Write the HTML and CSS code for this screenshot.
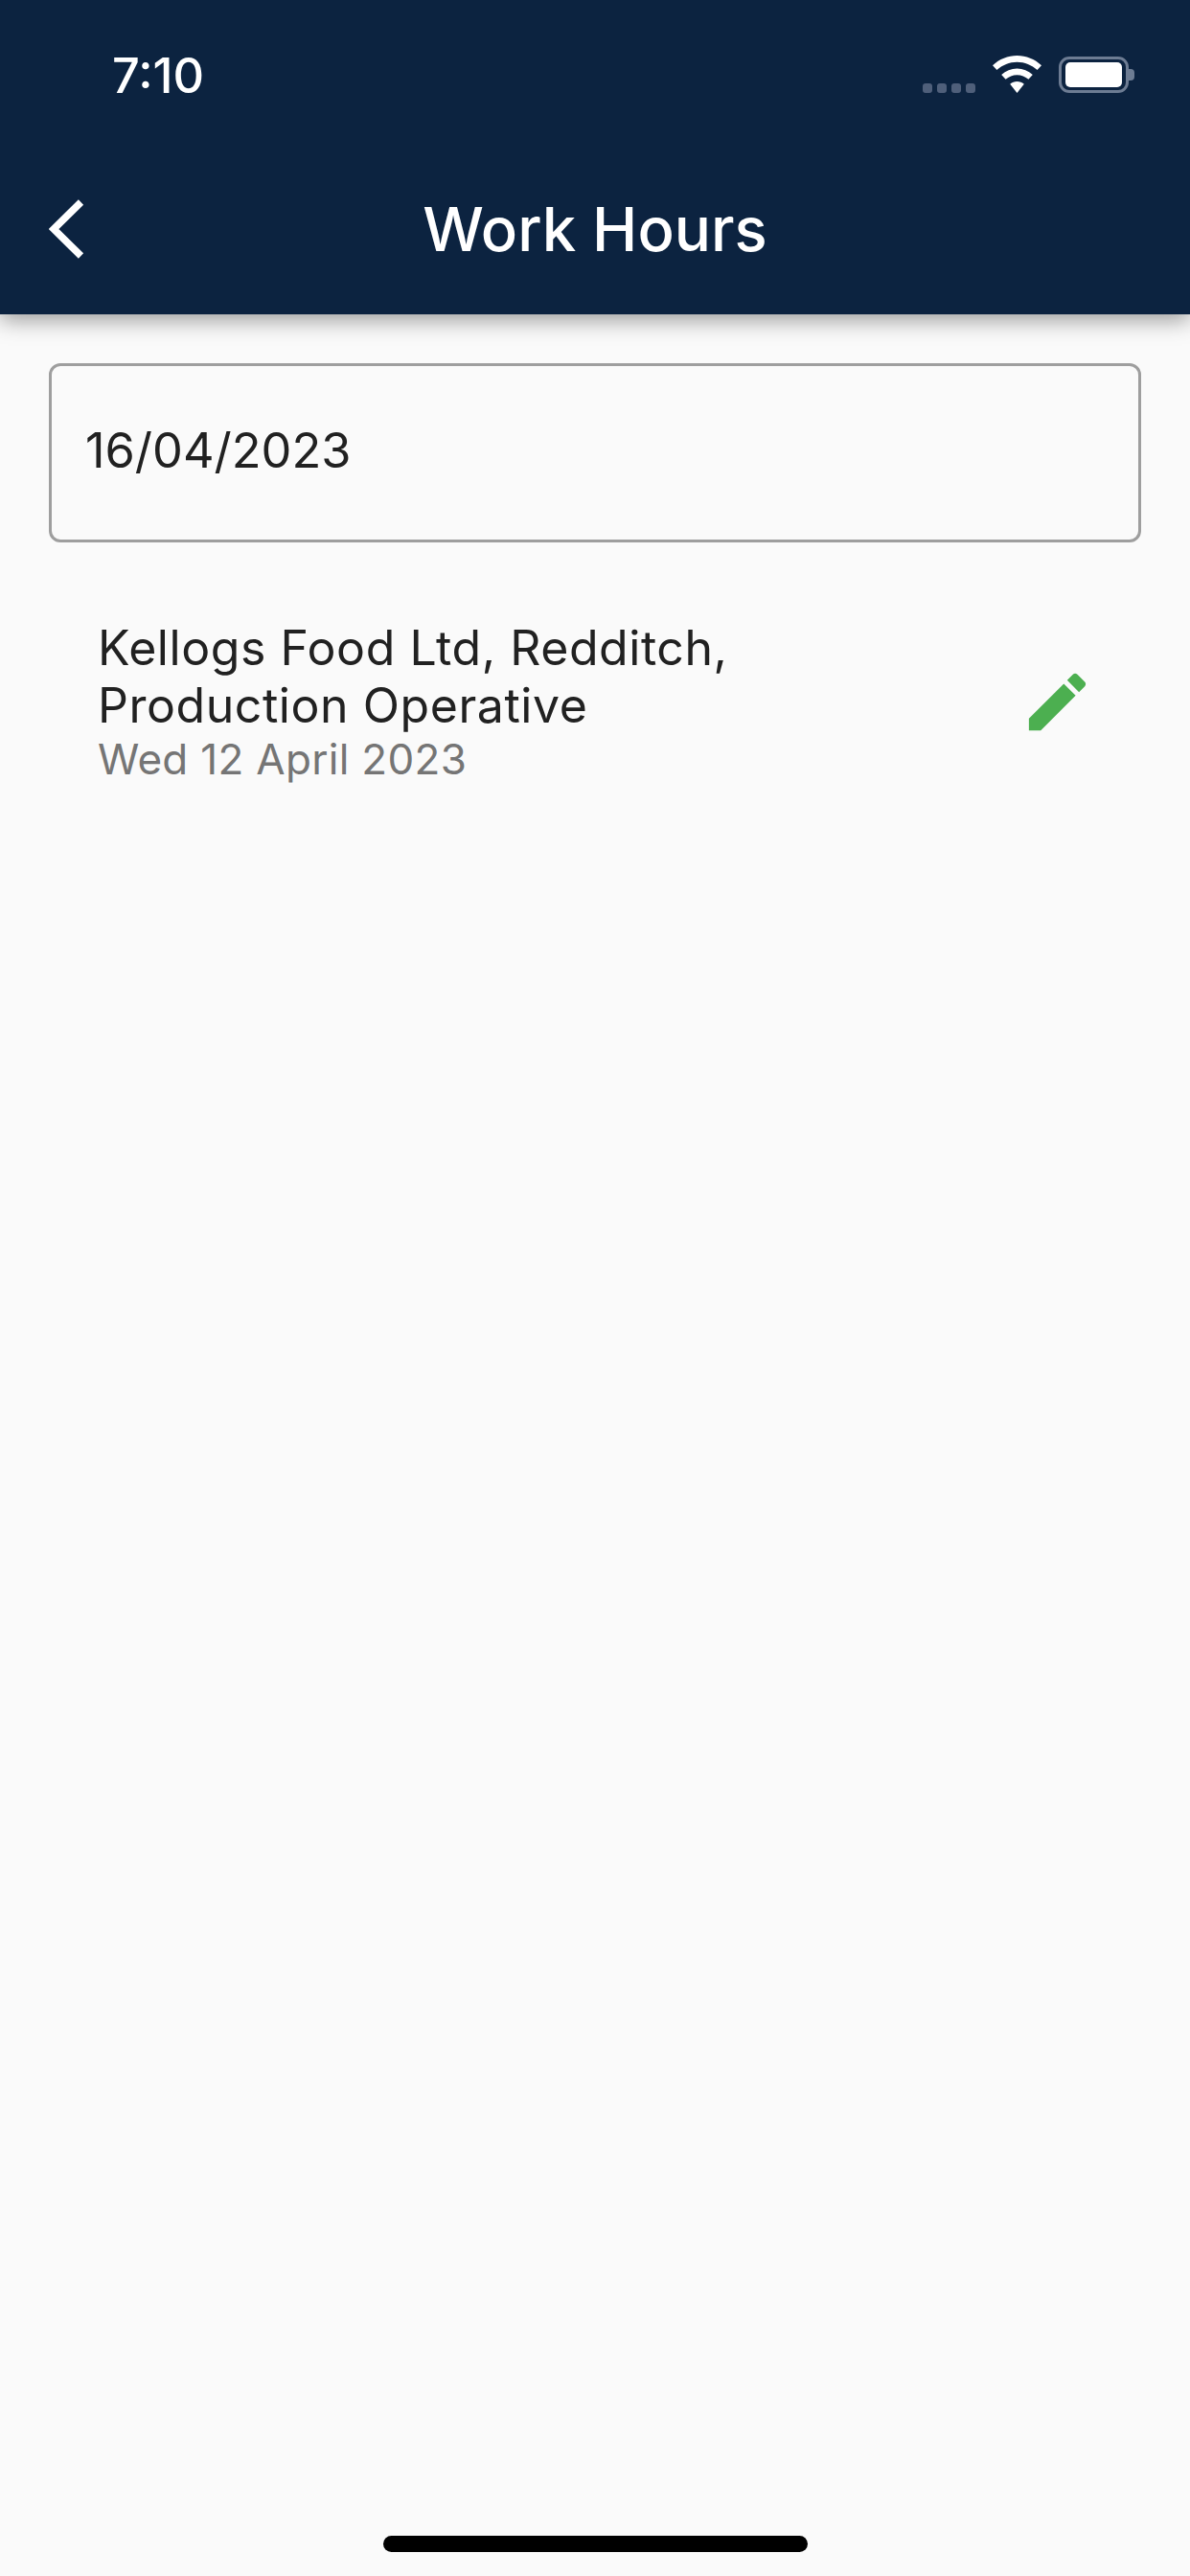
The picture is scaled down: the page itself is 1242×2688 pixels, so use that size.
FILE: index.html
```html
<!DOCTYPE html>
<html lang="en">
<head>
    <meta charset="UTF-8">
    <meta name="viewport" content="width=device-width, initial-scale=1.0">
    <title>Work Hours</title>
    <link rel="stylesheet" href="styles.css">
</head>
<body>
    <div class="screen">
        <header class="top-bar">
            <div class="status-bar">
                <div class="time">7:10</div>
                <div class="status-icons">
                    <div class="signal">
                        <span class="signal-dot"></span>
                        <span class="signal-dot"></span>
                        <span class="signal-dot"></span>
                        <span class="signal-dot"></span>
                    </div>
                    <svg class="wifi" viewBox="0 0 51 39" width="51" height="39">
                        <path fill="#fff" d="M25.5 0C35 0 43.900 3.700 51 10.200L46.600 15.100C40.800 9.900 33.400 6.800 25.500 6.800C17.600 6.800 10.200 9.900 4.400 15.100L0 10.200C7.100 3.700 16 0 25.500 0Z"/>
                        <path fill="#fff" d="M25.500 13.500C31.600 13.500 37.300 15.800 41.800 19.900L37.400 24.800C34.100 21.900 30 20.200 25.500 20.200C21 20.200 16.900 21.900 13.600 24.800L9.200 19.900C13.700 15.800 19.400 13.500 25.500 13.500Z"/>
                        <path fill="#fff" d="M25.500 27C28.200 27 30.800 28 32.800 29.800L25.500 39L18.200 29.800C20.200 28 22.800 27 25.500 27Z"/>
                    </svg>
                    <div class="battery">
                        <div class="battery-shell"><div class="battery-fill"></div></div>
                        <div class="battery-nub"></div>
                    </div>
                </div>
            </div>
            <div class="app-bar">
                <svg class="back" viewBox="0 0 37 62" width="37" height="62">
                    <path d="M33.500 3L5 31L33.500 59" fill="none" stroke="#fff" stroke-width="7.500"/>
                </svg>
                <div class="app-title">Work Hours</div>
            </div>
        </header>

        <main class="content">
            <div class="date-field">16/04/2023</div>

            <div class="job-row">
                <div class="job-text">
                    <div class="job-name">Kellogs Food Ltd, Redditch,<br>Production Operative</div>
                    <div class="job-date">Wed 12 April 2023</div>
                </div>
                <svg class="edit-icon" viewBox="0 0 24 24" width="79" height="79">
                    <path fill="#4caf50" d="M3 17.250V21h3.750L17.810 9.940l-3.750-3.750L3 17.250zM20.710 7.040c.39-.39.39-1.020 0-1.410l-2.340-2.340c-.39-.39-1.020-.39-1.410 0l-1.830 1.830 3.750 3.750 1.830-1.830z"/>
                </svg>
            </div>
        </main>

        <div class="home-bar"></div>
    </div>
</body>
</html>
```

FILE: styles.css
```css
body {
    margin: 0;
    font-family: Inter, "Liberation Sans", sans-serif;
    background: #fafafa;
    color: #212121;
}

.screen {
    width: 1242px;
    height: 2688px;
    display: flex;
    flex-direction: column;
    overflow: hidden;
}

.top-bar {
    height: 328px;
    flex: 0 0 auto;
    background: #0c2340;
    color: #fff;
    box-shadow: 0 6px 22px rgba(0,0,0,0.38);
}

.status-bar {
    height: 158px;
    box-sizing: border-box;
    padding: 50px 58px 0 117px;
    display: flex;
    justify-content: space-between;
    align-items: flex-start;
}

.time {
    font-size: 50.5px;
    font-weight: 500;
    line-height: 58px;
}

.status-icons {
    display: flex;
    align-items: flex-end;
    margin-top: 8px;
}

.signal {
    display: flex;
    gap: 5px;
    margin-right: 18px;
}

.signal-dot {
    width: 10px;
    height: 10px;
    border-radius: 3px;
    background: #4f5f7a;
}

.wifi {
    margin-right: 18px;
}

.battery {
    display: flex;
    align-items: center;
}

.battery-shell {
    width: 73px;
    height: 38px;
    box-sizing: border-box;
    border: 3px solid #6d7c93;
    border-radius: 11px;
    padding: 3px 4px;
}

.battery-fill {
    height: 100%;
    background: #fff;
    border-radius: 5px;
}

.battery-nub {
    width: 6px;
    height: 12px;
    background: #6d7c93;
    border-radius: 0 4px 4px 0;
}

.app-bar {
    height: 170px;
    display: flex;
    align-items: center;
    justify-content: center;
    position: relative;
    padding-bottom: 10px;
    box-sizing: border-box;
}

.back {
    position: absolute;
    left: 51px;
    top: 50px;
}

.app-title {
    font-size: 63.5px;
    font-weight: 500;
}

.content {
    flex: 1;
    padding: 51px 51px 0;
}

.date-field {
    height: 187px;
    box-sizing: border-box;
    border: 3px solid #9e9e9e;
    border-radius: 12px;
    padding: 0 35px 6px;
    display: flex;
    align-items: center;
    font-size: 50.5px;
}

.job-row {
    display: flex;
    align-items: center;
    justify-content: space-between;
    padding: 80px 48px 0 51px;
}

.job-name {
    font-size: 50px;
    line-height: 60px;
    letter-spacing: 0.55px;
}

.job-date {
    font-size: 44px;
    line-height: 52px;
    letter-spacing: 0.3px;
    color: #757575;
}

.home-bar {
    width: 443px;
    height: 17px;
    border-radius: 9px;
    background: #000;
    margin: 0 auto 25px;
}
```
